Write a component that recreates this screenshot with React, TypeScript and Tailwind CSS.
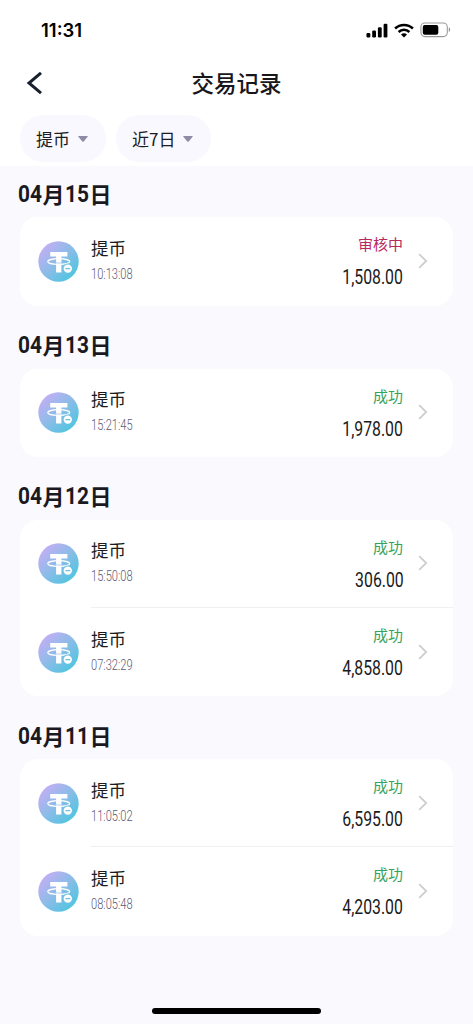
import React from 'react';

type Transaction = {
  time: string;
  amount: string;
  status: 'pending' | 'success';
};

type DayGroup = {
  month: string;
  day: string;
  items: Transaction[];
};

const groups: DayGroup[] = [
  { month: '04', day: '15', items: [{ time: '10:13:08', amount: '1,508.00', status: 'pending' }] },
  { month: '04', day: '13', items: [{ time: '15:21:45', amount: '1,978.00', status: 'success' }] },
  {
    month: '04',
    day: '12',
    items: [
      { time: '15:50:08', amount: '306.00', status: 'success' },
      { time: '07:32:29', amount: '4,858.00', status: 'success' },
    ],
  },
  {
    month: '04',
    day: '11',
    items: [
      { time: '11:05:02', amount: '6,595.00', status: 'success' },
      { time: '08:05:48', amount: '4,203.00', status: 'success' },
    ],
  },
];

const StatusBar = () => (
  <div className="flex h-[60px] items-center justify-between pl-[41px] pr-[22px]">
    <span className="pt-px font-['Inter',sans-serif] text-[18.5px] font-semibold leading-none text-black">
      11:31
    </span>
    <div className="flex items-center gap-[6px]">
      <svg width="22" height="15" viewBox="0 0 22 15" fill="#000">
        <rect x="0.5" y="10" width="3.8" height="4.5" rx="1.2" />
        <rect x="6.2" y="7.5" width="3.8" height="7" rx="1.2" />
        <rect x="11.9" y="4.2" width="3.8" height="10.3" rx="1.2" />
        <rect x="17.6" y="0.7" width="3.8" height="13.8" rx="1.2" />
      </svg>
      <svg width="20" height="15" viewBox="0 0 20 15" fill="none" stroke="#000" strokeWidth="2.5">
        <path d="M1.1 5.5a12.8 12.8 0 0 1 17.8 0" />
        <path d="M4.6 9a7.8 7.8 0 0 1 10.8 0" />
        <path d="M10 14.6 7 11.6a4.3 4.3 0 0 1 6 0Z" fill="#000" stroke="none" />
      </svg>
      <svg width="31" height="16" viewBox="0 0 31 16">
        <rect x="0.9" y="1" width="26.4" height="13.6" rx="4" fill="none" stroke="#9a9a9a" strokeWidth="1.1" />
        <rect x="2.8" y="2.9" width="15.5" height="9.8" rx="2" fill="#000" />
        <path d="M28.8 5.6c1.7.6 1.7 3.8 0 4.4Z" fill="#8a8a8a" />
      </svg>
    </div>
  </div>
);

const FilterButton = ({ label, width }: { label: string; width: string }) => (
  <button className={`flex h-[47px] items-center rounded-full bg-[#f8f8fe] pl-4 ${width}`}>
    <span className="text-[17px] leading-none text-[#1c1c22]">{label}</span>
    <svg className="ml-2" width="10" height="6" viewBox="0 0 10 6" fill="#8d8ba6">
      <path d="M.7 0h8.6q.9 0 .3.8L5.7 5.4q-.7.7-1.4 0L.4.8Q-.2 0 .7 0Z" />
    </svg>
  </button>
);

const CoinIcon = () => (
  <svg className="shrink-0" width="41" height="41" viewBox="0 0 41 41">
    <defs>
      <linearGradient id="coin" x1="0.1" y1="0.12" x2="0.85" y2="0.9">
        <stop offset="0" stopColor="#c4aef4" />
        <stop offset="0.5" stopColor="#8cbce8" />
        <stop offset="1" stopColor="#4fc5df" />
      </linearGradient>
    </defs>
    <circle cx="20.5" cy="20.5" r="20.2" fill="url(#coin)" />
    <ellipse cx="20.7" cy="20.6" rx="11" ry="2.9" fill="none" stroke="#fff" strokeWidth="1.2" />
    <path d="M12.2 11h17.2v4.4h-6v16h-5.3v-16h-5.9Z" fill="#fff" />
    <path d="M18.1 21.9q2.6.3 5.3 0" fill="none" stroke="#8cbce8" strokeWidth="0.7" />
    <circle cx="29.8" cy="27.6" r="5.1" fill="#68c1e3" />
    <circle cx="29.8" cy="27.6" r="4.2" fill="#fff" />
    <path d="M27.4 27.6h4.8" stroke="#68c1e3" strokeWidth="1.3" />
  </svg>
);

const TransactionRow = ({ item, last }: { item: Transaction; last: boolean }) => (
  <div className="flex h-[88.2px] items-center pl-[17.5px]">
    <CoinIcon />
    <div
      className={`ml-[12.5px] flex h-full flex-1 items-center justify-between border-b pr-[25px] ${
        last ? 'border-transparent' : 'border-[#f0f0f3]'
      }`}
    >
      <div className="flex flex-col items-start pb-px">
        <span className="text-[17.5px] leading-[26px] text-[#1c1c20]">提币</span>
        <span className="mt-px origin-left scale-x-[0.74] font-['Roboto',sans-serif] text-[15px] font-light leading-6 text-[#5c5976]">
          {item.time}
        </span>
      </div>
      <div className="flex items-center gap-[14px]">
        <div className="flex flex-col items-end pt-[2px]">
          {item.status === 'pending' ? (
            <span className="pr-px text-[15px] leading-6 text-[#b82960]">审核中</span>
          ) : (
            <span className="pr-px text-[15px] leading-6 text-[#35a35d]">成功</span>
          )}
          <span className="mt-[7px] origin-right scale-x-[0.79] pr-px font-['Roboto',sans-serif] text-[20px] leading-7 text-[#1a1a1c]">
            {item.amount}
          </span>
        </div>
        <svg width="10" height="16" viewBox="0 0 10 16" fill="none" stroke="#cecece" strokeWidth="1.8">
          <path d="m1.2 1.2 7 6.8-7 6.8" />
        </svg>
      </div>
    </div>
  </div>
);

// Chiffres condensés de la date
const DateDigits = ({ value }: { value: string }) => (
  <span className="w-[25px] pt-[2px]">
    <span className="block w-[28px] origin-left scale-x-[0.87] font-['Roboto',sans-serif] text-[24px]">{value}</span>
  </span>
);

const App = () => {
  return (
    <div className="flex h-[1024px] w-[473px] flex-col overflow-hidden bg-[#f9f9fe] font-['Noto_Sans_CJK_SC',sans-serif]">
      <header className="h-[166px] shrink-0 bg-white">
        <StatusBar />
        <div className="grid h-[46px] grid-cols-[60px_1fr_60px] items-center">
          <button className="pl-[26px]" aria-label="返回">
            <svg width="17" height="24" viewBox="0 0 17 24" fill="none" stroke="#17202c" strokeWidth="3">
              <path d="M15 1.8 3 12l12 10.2" />
            </svg>
          </button>
          <h1 className="pb-px text-center text-[22.5px] font-medium leading-none text-[#17171c]">交易记录</h1>
        </div>
        <div className="mt-[9px] flex gap-[10px] pl-5">
          <FilterButton label="提币" width="w-[86px]" />
          <FilterButton label="近7日" width="w-[95px]" />
        </div>
      </header>

      <main className="flex flex-1 flex-col gap-3 pt-[0.4px]">
        {groups.map((group) => (
          <section key={group.day}>
            <h2 className="flex h-[51px] items-center pl-[17.5px] pt-[2px] text-[22px] font-bold leading-none text-[#19191f]">
              <DateDigits value={group.month} />
              <span>月</span>
              <DateDigits value={group.day} />
              <span>日</span>
            </h2>
            {/* Une carte par jour */}
            <div className="mx-5 rounded-[18px] bg-white">
              {group.items.map((item, index) => (
                <TransactionRow key={item.time} item={item} last={index === group.items.length - 1} />
              ))}
            </div>
          </section>
        ))}
      </main>

      <footer className="flex h-4 shrink-0 justify-center">
        <div className="h-[6px] w-[169px] rounded-full bg-black" />
      </footer>
    </div>
  );
};

export default App;
